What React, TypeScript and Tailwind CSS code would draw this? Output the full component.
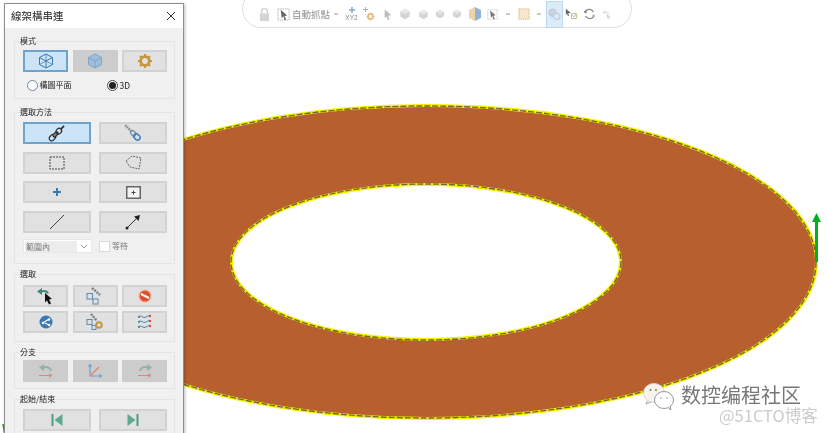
import React from "react";

const cjk = { fontFamily: '"Noto Sans CJK TC", "Noto Sans", sans-serif' };

type BtnProps = { w: string; active?: boolean; dim?: boolean; children?: React.ReactNode };
function Btn({ w, active, dim, children }: BtnProps) {
  const tone = active
    ? "bg-[#cce4f7] border-[#6fa3cf]"
    : dim
      ? "bg-[#cccccc] border-[#cccccc]"
      : "bg-[#e1e1e1] border-[#d2d2d2]";
  return (
    <div className={`${w} h-[22px] shrink-0 flex items-center justify-center border-2 ${tone}`}>
      {children}
    </div>
  );
}

function Section({ title, h, className = "", children }: { title: string; h: string; className?: string; children: React.ReactNode }) {
  return (
    <div className={`relative ${h} ${className} border border-[#e4e4e4] pl-[8px] pr-[7px]`}>
      <span className="absolute left-[5px] top-[-7px] text-[8px] leading-[11px] text-[#222]">{title}</span>
      {children}
    </div>
  );
}

const S = (p: { children: React.ReactNode; w?: number; h?: number }) => (
  <svg width={p.w ?? 18} height={p.h ?? 18} viewBox="0 0 18 18" fill="none">
    {p.children}
  </svg>
);

const Cube = ({ c, fill }: { c: string; fill?: string }) => (
  <S>
    <path d="M9 2l6.5 3.5v7L9 16l-6.500-3.500v-7z" fill={fill ?? "none"} stroke={c} strokeWidth="1" />
    <path d="M2.500 5.500L9 9l6.500-3.500M9 9v7" stroke={c} strokeWidth="1" />
    {!fill && <path d="M2.500 12.500L9 9l6.500 3.500M9 2v7" stroke={c} strokeWidth=".7" />}
  </S>
);
const Gear = ({ size = 16, c = "#c8963e" }: { size?: number; c?: string }) => (
  <svg width={size} height={size} viewBox="0 0 16 16">
    <circle cx="8" cy="8" r="4.300" fill="none" stroke={c} strokeWidth="2.800" />
    <path d="M8 1v2.500M8 12.500V15M1 8h2.500M12.500 8H15M3 3l1.800 1.800M11.200 11.200L13 13M13 3l-1.800 1.800M4.800 11.200L3 13" stroke={c} strokeWidth="2.200" />
  </svg>
);
const ChainDark = () => (
  <svg width="18" height="18" viewBox="0 0 18 18" fill="none" stroke="#2a2a2a" strokeWidth="1.200">
    <g transform="rotate(-45 9 9)">
      <rect x="-1" y="6.500" width="7" height="5" rx="2.500" />
      <rect x="4" y="7.500" width="6" height="3" rx="1.500" fill="#888" />
      <rect x="8.500" y="6.500" width="6" height="5" rx="2.500" />
      <path d="M14.500 9h4.500" strokeWidth="1.600" />
    </g>
  </svg>
);
const ChainBlue = () => (
  <svg width="18" height="18" viewBox="0 0 18 18" fill="none">
    <g transform="rotate(45 9 9)">
      <path d="M-2 9h9" stroke="#8a8a8a" strokeWidth="2.600" strokeDasharray="1.500 .8" />
      <rect x="6.500" y="7" width="6" height="4" rx="2" stroke="#6a8aaa" strokeWidth="1.200" />
      <rect x="11" y="6.500" width="7" height="5" rx="2.500" stroke="#3c7fc0" strokeWidth="1.500" />
    </g>
  </svg>
);
const Rail = () => (
  <S>
    <rect x="1" y="6.500" width="5.500" height="5.500" stroke="#5f88ad" />
    <rect x="7" y="12" width="5" height="5" stroke="#5f88ad" />
    <path d="M6 1l8 7" stroke="#808080" strokeWidth="2.500" strokeDasharray="2 1" />
  </S>
);
const BranchBack = ({ flip }: { flip?: boolean }) => (
  <S>
    <g transform={flip ? "translate(18 0) scale(-1 1)" : undefined}>
      <path d="M2 5.500L7 2v7z" fill="#8fb3aa" />
      <path d="M6 5.500c4-1 7 0 8 3.500" stroke="#8fb3aa" strokeWidth="2" />
    </g>
    <path d="M2 13.500h12M12 11.500l3 2-3 2" stroke="#d98770" />
  </S>
);

function Panel() {
  return (
    <div style={cjk} className="absolute left-[4px] top-[3px] w-[180px] h-[440px] bg-[#f0f0f0] border border-[#8f8f8f] shadow-[1px_1px_3px_rgba(0,0,0,0.25)]">
      <div className="h-[24px] bg-white flex items-center justify-between pl-[6px] pr-[7px]">
        <span className="text-[10.500px] text-[#222]">線架構串連</span>
        <svg width="10" height="10" viewBox="0 0 10 10">
          <path d="M1 1l8 8M9 1l-8 8" stroke="#333" strokeWidth="1" />
        </svg>
      </div>
      <div className="flex flex-col gap-[10px] pt-[13px] pl-[9px] pr-[8px]">
        <Section title="模式" h="h-[58px]">
          <div className="flex justify-between pt-[8px]">
            <Btn w="w-[45px]" active><Cube c="#3f78a8" /></Btn>
            <Btn w="w-[45px]" dim><Cube c="#7ea6c8" fill="#9dbdd8" /></Btn>
            <Btn w="w-[45px]"><Gear /></Btn>
          </div>
          <div className="flex items-center text-[8px] text-[#222] pt-[4px] h-[22px] pl-[4px]">
            <span className="w-[11px] h-[11px] rounded-full border border-[#6a8aa8] bg-white" />
            <span className="ml-[1.500px]">構圖平面</span>
            <span className="ml-[35px] w-[11px] h-[11px] rounded-full border border-[#444] bg-white flex items-center justify-center">
              <span className="w-[7px] h-[7px] rounded-full bg-[#222]" />
            </span>
            <span className="ml-[2px] text-[8.500px]">3D</span>
          </div>
        </Section>

        <Section title="選取方法" h="h-[152px]" className="mt-[3px]">
          <div className="grid grid-cols-[68px_68px] justify-between gap-y-[7.500px] pt-[9px]">
            <Btn w="w-[68px]" active><ChainDark /></Btn>
            <Btn w="w-[68px]"><ChainBlue /></Btn>
            <Btn w="w-[68px]">
              <svg width="16" height="14"><rect x="1" y="1" width="14" height="12" fill="none" stroke="#444" strokeDasharray="2 1" /></svg>
            </Btn>
            <Btn w="w-[68px]">
              <svg width="17" height="15"><path d="M1 6l6-5 9 2-2 11-9-2z" fill="none" stroke="#666" strokeDasharray="2 1" /></svg>
            </Btn>
            <Btn w="w-[68px]">
              <svg width="10" height="10"><path d="M5 1v8M1 5h8" stroke="#3a78bd" strokeWidth="2" /></svg>
            </Btn>
            <Btn w="w-[68px]">
              <svg width="15" height="13"><rect x=".750" y=".750" width="13.500" height="11.500" fill="#f4f4f4" stroke="#666" strokeWidth="1.500" /><path d="M7.500 4.500v4M5.500 6.500h4" stroke="#444" /></svg>
            </Btn>
            <Btn w="w-[68px]">
              <svg width="16" height="16"><path d="M1 15L15 1" stroke="#444" /></svg>
            </Btn>
            <Btn w="w-[68px]">
              <svg width="16" height="16"><path d="M2 14L13 3" stroke="#333" /><path d="M15 1l-1.500 6L9 2.500z" fill="#222" /><circle cx="2" cy="14" r="1.500" fill="#222" /></svg>
            </Btn>
          </div>
          <div className="flex items-center pt-[6.500px] text-[8px] text-[#777]">
            <div className="w-[69px] h-[14px] bg-white flex items-center justify-between pl-[1px] pr-[3px] border border-[#e8e8e8]">
              <span className="w-[52px] bg-[#ececec] leading-[11px] pl-[1px]">範圍內</span>
              <svg width="8" height="5"><path d="M1 1l3 3 3-3" fill="none" stroke="#999" /></svg>
            </div>
            <span className="ml-[7px] w-[11px] h-[11px] bg-white border border-[#d8d8d8]" />
            <span className="ml-[2px]">等待</span>
          </div>
        </Section>

        <Section title="選取" h="h-[68px]">
          <div className="grid grid-cols-[45px_45px_45px] justify-between gap-y-[4px] pt-[10px]">
            <Btn w="w-[45px]">
              <S>
                <path d="M0 4.500L5 1v7z" fill="#3d8a78" />
                <path d="M4 4.500c3-1 6-.5 7 2" stroke="#3d8a78" strokeWidth="2" />
                <path d="M8 6l7 6-3 .500 2 4-2 1-2-4-2 2z" fill="#111" />
              </S>
            </Btn>
            <Btn w="w-[45px]"><Rail /></Btn>
            <Btn w="w-[45px]">
              <svg width="16" height="16"><circle cx="8" cy="8" r="7" fill="#f4c4b0" /><circle cx="8" cy="8" r="5.500" fill="#dc5030" /><path d="M4 6l8 4" stroke="#fff" strokeWidth="2" /></svg>
            </Btn>
            <Btn w="w-[45px]">
              <svg width="14" height="14"><circle cx="7" cy="7" r="6.500" fill="#3b78b8" /><path d="M3.500 8l6-3.500M6 8l4 2" stroke="#fff" strokeWidth="1.200" /><circle cx="4" cy="8" r="1.300" fill="#fff" /><circle cx="10" cy="4.500" r="1.300" fill="#fff" /><circle cx="10" cy="10" r="1.300" fill="#fff" /></svg>
            </Btn>
            <Btn w="w-[45px]">
              <S>
                <rect x="1" y="6.500" width="5" height="5" stroke="#5f88ad" />
                <rect x="6" y="12.500" width="4" height="4" stroke="#5f88ad" />
                <path d="M5 1l6 7" stroke="#808080" strokeWidth="2.500" strokeDasharray="2 1" />
                <circle cx="13" cy="12" r="2.800" stroke="#c8963e" strokeWidth="2" />
              </S>
            </Btn>
            <Btn w="w-[45px]">
              <S>
                <path d="M2 4c3-3 5 2 8 0s3-1 5-1M2 9c3-3 5 2 8 0s3-1 5-1M2 14c3-3 5 2 8 0s3-1 5-1" stroke="#4a86bd" />
                <circle cx="14" cy="3" r="1.200" fill="#d8502c" />
                <circle cx="14" cy="8" r="1.200" fill="#d8502c" />
                <circle cx="14" cy="13" r="1.200" fill="#d8502c" />
                <circle cx="3" cy="4" r="1" fill="#3d8a78" />
                <circle cx="3" cy="9" r="1" fill="#3d8a78" />
                <circle cx="3" cy="14" r="1" fill="#3d8a78" />
              </S>
            </Btn>
          </div>
        </Section>

        <Section title="分支" h="h-[37px]">
          <div className="flex justify-between pt-[7px]">
            <Btn w="w-[45px]" dim><BranchBack /></Btn>
            <Btn w="w-[45px]" dim>
              <S><path d="M4 3v11h11" stroke="#6a9fd0" strokeWidth="1.200" /><path d="M2.500 5L4 2l1.500 3M13 12.500l3 1.500-3 1.500" stroke="#6a9fd0" /><path d="M4 14L13 5" stroke="#d98770" strokeWidth="1.200" /></S>
            </Btn>
            <Btn w="w-[45px]" dim><BranchBack flip /></Btn>
          </div>
        </Section>

        <Section title="起始/結束" h="h-[60px]">
          <div className="flex justify-between pt-[9px]">
            <Btn w="w-[68px]">
              <svg width="12" height="12"><path d="M1.500 0v12" stroke="#4f9c84" strokeWidth="2" /><path d="M11.500 0v12L3.500 6z" fill="#5fa890" /></svg>
            </Btn>
            <Btn w="w-[68px]">
              <svg width="12" height="12"><path d="M10.500 0v12" stroke="#4f9c84" strokeWidth="2" /><path d="M.5 0v12l8-6z" fill="#5fa890" /></svg>
            </Btn>
          </div>
        </Section>
      </div>
    </div>
  );
}

const Shade = ({ size, className }: { size: number; className: string }) => (
  <svg width={size} height={size} viewBox="0 0 14 14" className={className}>
    <path d="M7 1l5.500 3v6L7 13l-5.500-3V4z" fill="#d4d4d4" />
    <path d="M1.500 4L7 7l5.500-3L7 1z" fill="#e8e8e8" />
  </svg>
);
const Caret = ({ className }: { className: string }) => <span className={`w-[4px] h-[2px] bg-[#cccccc] shrink-0 ${className}`} />;

function Toolbar() {
  return (
    <div style={cjk} className="absolute left-[242px] top-[-10px] w-[390px] h-[38px] pt-[10px] rounded-full bg-white border border-[#dfdfdf] flex items-center text-[9.500px] text-[#8f8f8f]">
      <svg width="9" height="13" viewBox="0 0 9 13" className="ml-[17px] shrink-0"><rect x="0" y="5.500" width="9" height="7.500" fill="#d4d4d4" /><path d="M1.500 6V3.500a3 3 0 0 1 6 0V6" fill="none" stroke="#d4d4d4" strokeWidth="1.500" /></svg>
      <svg width="13" height="13" viewBox="0 0 14 14" className="ml-[8px] shrink-0"><rect x="1" y="1" width="12" height="12" fill="none" stroke="#aaa" strokeDasharray="1.500 1" /><path d="M4 2l7 6-3 .500 2 4-2 .500-1-4-2 2z" fill="#666" /></svg>
      <span className="ml-[2px] w-[38px] shrink-0 whitespace-nowrap">自動抓點</span>
      <Caret className="ml-[4px]" />
      <div className="relative w-[13px] h-[14px] ml-[7px] shrink-0 flex items-end justify-center text-[6.500px] leading-[7px] text-[#888]" style={{ fontFamily: '"Liberation Sans", sans-serif' }}>
        <span>XY2</span>
        <svg width="6" height="6" className="absolute top-0 left-[3.500px]"><path d="M3 0v6M0 3h6" stroke="#7faad6" strokeWidth="1.500" /></svg>
      </div>
      <div className="relative w-[12px] h-[14px] ml-[5px] shrink-0 flex items-end justify-end">
        <svg width="5" height="5" className="absolute left-0 top-0"><path d="M2.500 0v5M0 2.500h5" stroke="#aaa" /></svg>
        <Gear size={9} c="#e3b774" />
      </div>
      <svg width="10" height="13" viewBox="0 0 12 14" className="ml-[8px] shrink-0"><path d="M2 1l8 7-4 .500 2 4.500-2 .500-2-4-2 2z" fill="#bbb" /></svg>
      <Shade size={12} className="ml-[6px] shrink-0" />
      <Shade size={11} className="ml-[7px] shrink-0" />
      <Shade size={10} className="ml-[6px] shrink-0" />
      <Shade size={10} className="ml-[7px] shrink-0" />
      <svg width="14" height="16" viewBox="0 0 14 16" className="ml-[6px] shrink-0">
        <path d="M7 1l6 3v8l-6 3z" fill="#8fb4d8" />
        <path d="M7 1L1 4v8l6 3z" fill="#f0d2a8" />
      </svg>
      <svg width="11" height="13" viewBox="0 0 14 14" className="ml-[5px] shrink-0"><rect x="1" y="1" width="12" height="12" fill="none" stroke="#bbb" strokeDasharray="1.500 1" /><path d="M4 2l7 6-3 .500 2 4-2 .500-1-4-2 2z" fill="#777" /></svg>
      <Caret className="ml-[8px]" />
      <svg width="12" height="12" viewBox="0 0 14 14" className="ml-[8px] shrink-0"><rect x="1" y="1" width="12" height="12" fill="#fae6cc" stroke="#c8b080" strokeDasharray="1.500 1" /></svg>
      <Caret className="ml-[7px]" />
      <div className="w-[17px] h-[27px] shrink-0 bg-[#dcebf8] border border-[#bcd8f0] flex items-center justify-center ml-[5px]">
        <svg width="13" height="13" viewBox="0 0 14 14"><circle cx="5" cy="5" r="4" fill="#c8d4df" stroke="#b4c4d2" /><circle cx="9.500" cy="9" r="3.500" fill="#dfe8f0" stroke="#b4c4d2" /></svg>
      </div>
      <svg width="13" height="14" viewBox="0 0 16 15" className="ml-[2px] shrink-0"><path d="M1 1l6 5-3 .500 1 3-1.500.500-1-3-1.500 1.500z" fill="#666" /><rect x="8" y="7" width="6" height="6" fill="none" stroke="#c8b080" /><path d="M9 9l2 2 3-4" fill="none" stroke="#7fb59c" /></svg>
      <svg width="13" height="14" viewBox="0 0 16 15" className="ml-[5px] shrink-0"><path d="M3 4a6 6 0 0 1 10 1M13 11a6 6 0 0 1-10-1" fill="none" stroke="#888" strokeWidth="1.500" /><circle cx="3" cy="5" r="1.500" fill="#777" /><circle cx="13" cy="10" r="1.500" fill="#7fb59c" /></svg>
      <svg width="10" height="11" viewBox="0 0 13 13" className="ml-[6px] shrink-0"><path d="M1 4l3-3v1.500c3 0 5 1 6 3-2-1-3-1-6-1V6z" fill="#d4dcd9" /><path d="M6 5l5 5-2 .300 1 2-1 .500-1-2-1.500 1z" fill="#d4d4d4" /></svg>
    </div>
  );
}

function Canvas() {
  return (
    <svg width="827" height="433" className="absolute left-0 top-0">
      <path fillRule="evenodd" fill="#b85f30" d="M36 262a390 156 0 1 0 780 0a390 156 0 1 0-780 0zM231 262a195 78 0 1 0 390 0a195 78 0 1 0-390 0z" />
      <ellipse cx="426" cy="262" rx="390.500" ry="156.500" fill="none" stroke="#f4f000" strokeWidth="3" />
      <ellipse cx="426" cy="262" rx="194.500" ry="77.500" fill="none" stroke="#f4f000" strokeWidth="3" />
      <ellipse cx="426" cy="262" rx="390" ry="156" fill="none" stroke="#6f6a30" strokeWidth="1.400" strokeDasharray="6 2" />
      <ellipse cx="426" cy="262" rx="195" ry="78" fill="none" stroke="#6f6a30" strokeWidth="1.400" strokeDasharray="6 2" />
      <path d="M816.500 262V221" stroke="#00b020" strokeWidth="3" />
      <path d="M812 222l4.500-9 4.500 9z" fill="#00b020" />
      <path d="M3 424l1.500 9" stroke="#1a9a30" strokeWidth="1.500" />
    </svg>
  );
}

function Watermark() {
  return (
    <>
      <svg width="32" height="28" viewBox="0 0 32 28" className="absolute left-[643px] top-[383px]">
        <ellipse cx="11" cy="10" rx="10.500" ry="9.500" fill="#f7f3ee" stroke="#d8d4ce" />
        <path d="M4 18l-1 3 5-2" fill="#f7f3ee" stroke="#aaa" />
        <circle cx="7.500" cy="7" r="1" fill="#8a7a50" />
        <circle cx="13" cy="7" r="1" fill="#8a7a50" />
        <ellipse cx="21" cy="17" rx="9.500" ry="8.500" fill="#fff" stroke="#999" />
        <path d="M25 24.500l3 2.500-1-4" fill="#fff" stroke="#999" />
        <circle cx="18" cy="15" r=".8" fill="#999" />
        <circle cx="24" cy="15" r=".8" fill="#999" />
      </svg>
      <span style={cjk} className="absolute left-[681px] top-[384px] text-[20px] leading-[22px] text-[#777] whitespace-nowrap [text-shadow:1px_1px_0_#fff]">
        数控编程社区
      </span>
      <span style={cjk} className="absolute left-[719px] top-[407px] text-[16.500px] leading-[16px] text-[#cbcbcb] whitespace-nowrap">
        @51CTO博客
      </span>
    </>
  );
}

export default function App() {
  return (
    <div className="relative w-[827px] h-[433px] overflow-hidden bg-white blur-[0.3px]">
      <Canvas />
      <Toolbar />
      <Panel />
      <Watermark />
    </div>
  );
}
